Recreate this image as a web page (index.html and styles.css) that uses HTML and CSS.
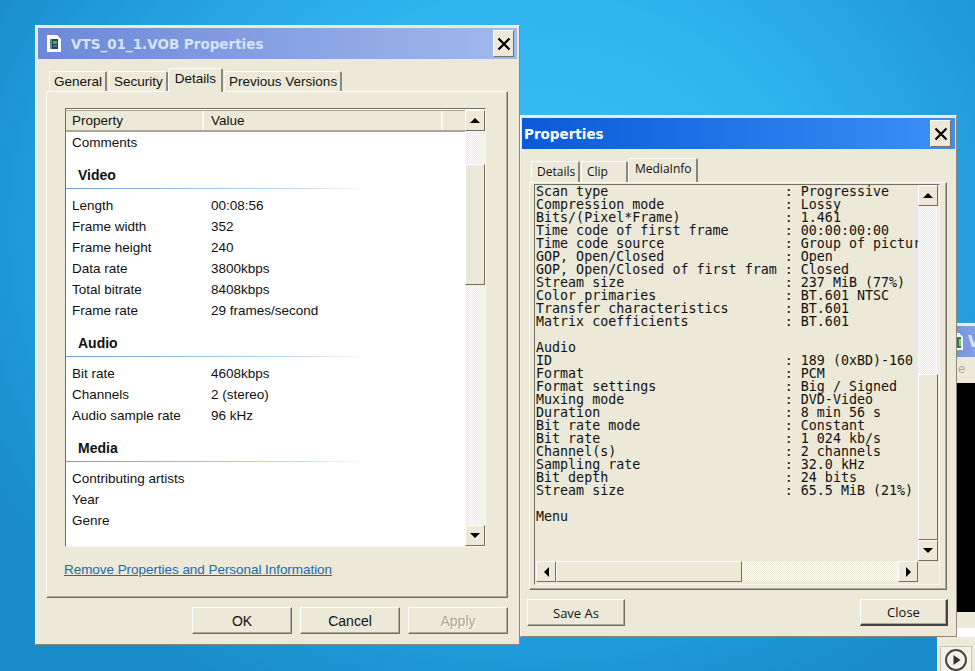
FILE: index.html
```html
<!DOCTYPE html>
<html lang="en">
<head>
    <meta charset="UTF-8">
    <title>VTS_01_1.VOB Properties</title>
    <link rel="stylesheet" href="styles.css">
</head>
<body>

    <!-- Janela de tras, quase toda escondida -->
    <div class="win win-back">
        <div class="titlebar title-faded">
            <svg class="doc-icon" viewBox="0 0 14 17"><path d="M0 0h10l4 4v13H0z" fill="#fff"/><rect x="3" y="4" width="9" height="11" fill="#2f7d4f"/><rect x="10" y="6" width="2" height="7" fill="#7fd08a"/></svg>
            <span class="back-title">V</span>
        </div>
        <div class="back-caption">e</div>
        <div class="back-video"></div>
        <div class="back-seek"></div>
        <div class="back-tools">
            <div class="play-btn">
                <svg viewBox="0 0 24 24" width="24" height="24"><circle cx="12" cy="12" r="10" fill="#f4f2e8" stroke="#444" stroke-width="2"/><path d="M9.5 7l7 5-7 5z" fill="#333"/></svg>
            </div>
        </div>
    </div>

    <!-- Propriedades do arquivo -->
    <div class="win win-file">
        <div class="titlebar title-faded">
            <svg class="doc-icon" viewBox="0 0 14 17"><path d="M0 0h10l4 4v13H0z" fill="#fff"/><rect x="3" y="4" width="8" height="10" fill="#25425e"/><rect x="3" y="4" width="2" height="10" fill="#6c8a78"/><rect x="6" y="6" width="4" height="3" fill="#5fa36d"/><rect x="6" y="10" width="4" height="2" fill="#3f78a8"/></svg>
            <span class="title-text">VTS_01_1.VOB Properties</span>
            <div class="close-btn"><svg viewBox="0 0 14 14" width="14" height="14"><path d="M1.5 1.5l11 11M12.5 1.5l-11 11" stroke="#000" stroke-width="2.2"/></svg></div>
        </div>

        <div class="tabs tabs-file">
            <div class="tab">General</div>
            <div class="tab">Security</div>
            <div class="tab tab-on">Details</div>
            <div class="tab">Previous Versions</div>
        </div>

        <div class="panel panel-file">
            <div class="list">
                <div class="list-main">
                    <div class="list-head">
                        <div class="col col-prop">Property</div>
                        <div class="col col-val">Value</div>
                        <div class="col col-rest"></div>
                    </div>
                    <div class="row"><span>Comments</span></div>

                    <div class="group">Video</div>
                    <div class="row"><span>Length</span><span>00:08:56</span></div>
                    <div class="row"><span>Frame width</span><span>352</span></div>
                    <div class="row"><span>Frame height</span><span>240</span></div>
                    <div class="row"><span>Data rate</span><span>3800kbps</span></div>
                    <div class="row"><span>Total bitrate</span><span>8408kbps</span></div>
                    <div class="row"><span>Frame rate</span><span>29 frames/second</span></div>

                    <div class="group">Audio</div>
                    <div class="row"><span>Bit rate</span><span>4608kbps</span></div>
                    <div class="row"><span>Channels</span><span>2 (stereo)</span></div>
                    <div class="row"><span>Audio sample rate</span><span>96 kHz</span></div>

                    <div class="group">Media</div>
                    <div class="row"><span>Contributing artists</span></div>
                    <div class="row"><span>Year</span></div>
                    <div class="row"><span>Genre</span></div>
                </div>
                <div class="vscroll">
                    <div class="sb-btn"><span class="arrow arrow-up"></span></div>
                    <div class="sb-track sb-track-a"></div>
                    <div class="sb-thumb thumb-file"></div>
                    <div class="sb-track"></div>
                    <div class="sb-btn"><span class="arrow arrow-down"></span></div>
                </div>
            </div>
            <a class="remove-link" href="#">Remove Properties and Personal Information</a>
        </div>

        <div class="actions actions-file">
            <div class="btn btn-file">OK</div>
            <div class="btn btn-file">Cancel</div>
            <div class="btn btn-file btn-off">Apply</div>
        </div>
    </div>

    <!-- Propriedades do MediaInfo -->
    <div class="win win-info">
        <div class="titlebar title-active">
            <span class="title-text">Properties</span>
            <div class="close-btn close-info"><svg viewBox="0 0 14 14" width="14" height="14"><path d="M1.5 1.5l11 11M12.5 1.5l-11 11" stroke="#000" stroke-width="2.2"/></svg></div>
        </div>

        <div class="tabs tabs-info">
            <div class="tab tab-details">Details</div>
            <div class="tab tab-clip">Clip</div>
            <div class="tab tab-on tab-media">MediaInfo</div>
        </div>

        <div class="panel panel-info">
            <div class="info-frame">
                <pre class="info-text">Scan type                      : Progressive
Compression mode               : Lossy
Bits/(Pixel*Frame)             : 1.461
Time code of first frame       : 00:00:00:00
Time code source               : Group of pictur
GOP, Open/Closed               : Open
GOP, Open/Closed of first fram : Closed
Stream size                    : 237 MiB (77%)
Color primaries                : BT.601 NTSC
Transfer characteristics       : BT.601
Matrix coefficients            : BT.601

Audio
ID                             : 189 (0xBD)-160
Format                         : PCM
Format settings                : Big / Signed
Muxing mode                    : DVD-Video
Duration                       : 8 min 56 s
Bit rate mode                  : Constant
Bit rate                       : 1 024 kb/s
Channel(s)                     : 2 channels
Sampling rate                  : 32.0 kHz
Bit depth                      : 24 bits
Stream size                    : 65.5 MiB (21%)

Menu</pre>
                <div class="vscroll">
                    <div class="sb-btn"><span class="arrow arrow-up"></span></div>
                    <div class="sb-track sb-track-b"></div>
                    <div class="sb-thumb thumb-info"></div>
                    <div class="sb-btn"><span class="arrow arrow-down"></span></div>
                </div>
                <div class="hscroll">
                    <div class="sb-btn sb-btn-h"><span class="arrow arrow-left"></span></div>
                    <div class="sb-thumb thumb-h"></div>
                    <div class="sb-track"></div>
                    <div class="sb-btn sb-btn-h"><span class="arrow arrow-right"></span></div>
                </div>
            </div>
        </div>

        <div class="actions actions-info">
            <div class="btn btn-save">Save As</div>
            <div class="btn btn-close">Close</div>
        </div>
    </div>

</body>
</html>
```

FILE: styles.css
```css
html, body {
    margin: 0;
    height: 100%;
}
body {
    position: relative;
    width: 975px;
    height: 671px;
    overflow: hidden;
    font-family: "Liberation Sans", Arial, sans-serif;
    font-size: 14px;
    color: #111;
    background: radial-gradient(ellipse 620px 520px at 530px 230px, #3cc0f8 0%, #2fb4ee 45%, #1f9ad8 80%, #1a8ccb 100%);
}

/* Janelas */
.win {
    position: absolute;
    box-sizing: border-box;
    display: flex;
    flex-direction: column;
    background: #ece9d8;
    border: 1px solid #8a887c;
    border-top-color: #f4f3ea;
    border-left-color: #f4f3ea;
    padding: 2px;
}
.win-file {
    left: 35px;
    top: 25px;
    width: 485px;
    height: 620px;
}
.win-info {
    left: 520px;
    top: 115px;
    width: 437px;
    height: 522px;
    padding: 2px 1px 2px 1px;
}
.win-back {
    left: 937px;
    top: 323px;
    width: 80px;
    height: 360px;
}

.titlebar {
    flex: none;
    height: 31px;
    display: flex;
    align-items: center;
    font-family: "DejaVu Sans", sans-serif;
    font-weight: bold;
    font-size: 13.5px;
}
.title-faded {
    background: linear-gradient(90deg, #6c88d8, #9fbaec);
    color: #d9e3f6;
    padding-left: 9px;
}
.title-active {
    background: linear-gradient(90deg, #0a5ad8, #3d8ff8);
    color: #fff;
    padding-left: 2px;
}
.title-text {
    white-space: nowrap;
}
.doc-icon {
    flex: none;
    width: 14px;
    height: 17px;
    margin-right: 10px;
}
.close-btn {
    box-sizing: border-box;
    margin-left: auto;
    margin-right: 3px;
    width: 21px;
    height: 27px;
    display: flex;
    align-items: center;
    justify-content: center;
    background: #ece9d8;
    border: 1px solid;
    border-color: #fff #716f64 #716f64 #fff;
}
.close-info {
    margin-right: 4px;
}
.win-back .doc-icon {
    margin-right: 5px;
}
.back-title {
    font-size: 15px;
}

/* Abas */
.tabs {
    flex: none;
    display: flex;
    align-items: flex-end;
    height: 23px;
    margin-top: 9px;
    font-size: 13.5px;
}
.tabs-file {
    padding-left: 11px;
}
.tabs-info {
    height: 24px;
    padding-left: 9px;
    font-family: "Open Sans", sans-serif;
    font-size: 12px;
}
.tab {
    box-sizing: border-box;
    height: 20px;
    padding: 0 3px 0 4px;
    line-height: 19px;
    white-space: nowrap;
    background: #ece9d8;
    border-top: 1px solid #fff;
    border-left: 1px solid #fff;
    border-right: 2px solid #8a887c;
    border-radius: 2px 2px 0 0;
    margin-right: 2px;
}
.tab-on {
    position: relative;
    height: 24px;
    line-height: 20px;
    margin: 0 1px 0 -2px;
    padding: 0 5px 3px 6px;
    z-index: 1;
    top: 1px;
}
.tab-details {
    width: 49px;
    margin-right: 1px;
    height: 21px;
    padding-left: 5px;
}
.tab-clip {
    width: 47px;
    margin-right: 0;
    height: 21px;
    padding-left: 5px;
}
.tab-media {
    width: 70px;
    margin: 0;
    top: 0;
    padding: 0 4px 0 6px;
    text-align: left;
}

.panel {
    box-sizing: border-box;
    display: flex;
    flex-direction: column;
    border: 1px solid;
    border-color: #fff #716f64 #716f64 #fff;
    box-shadow: inset -1px -1px #aca899;
}
.panel-file {
    width: 462px;
    height: 507px;
    margin-left: 8px;
    padding: 16px 0 0 18px;
}
.panel-info {
    width: 418px;
    height: 408px;
    margin-left: 7px;
    padding: 1px 0 0 4px;
}

/* Lista de detalhes */
.list {
    box-sizing: border-box;
    display: flex;
    width: 421px;
    height: 439px;
    background: #fff;
    border: 1px solid;
    border-color: #716f64 #f6f5ee #f6f5ee #716f64;
    padding-top: 1px;
}
.list-main {
    flex: 1;
    min-width: 0;
    font-size: 13.5px;
}
.list-head {
    display: flex;
    height: 22px;
    line-height: 20px;
    background: #ece9d8;
    box-sizing: border-box;
    border-bottom: 2px solid #aca899;
    border-top: 1px solid #a9a793;
}
.col {
    box-sizing: border-box;
    padding-left: 6px;
    border-right: 2px solid #fbfaf2;
}
.col-prop { width: 138px; }
.col-val { width: 239px; padding-left: 7px; }
.col-rest { flex: 1; border-right: 0; }

.row {
    display: grid;
    grid-template-columns: 139px 1fr;
    height: 21px;
    line-height: 21px;
    padding-left: 6px;
    white-space: nowrap;
}
.group {
    box-sizing: border-box;
    height: 36px;
    margin-bottom: 6px;
    padding: 13px 0 0 12px;
    font-weight: bold;
    font-size: 14px;
    line-height: 18px;
    color: #111;
    border-bottom: 1px solid;
    border-image: linear-gradient(90deg, #6a9fd4, #c6dcef 60%, #fff 75%) 1;
}

.remove-link {
    margin: 15px 0 0 -1px;
    color: #2468ad;
    font-size: 13.5px;
    line-height: 16px;
    white-space: nowrap;
    letter-spacing: -0.05px;
}

/* Barras de rolagem */
.vscroll {
    flex: none;
    width: 20px;
    display: flex;
    flex-direction: column;
}
.hscroll {
    display: flex;
    height: 21px;
}
.sb-btn {
    box-sizing: border-box;
    flex: none;
    height: 21px;
    display: flex;
    align-items: center;
    justify-content: center;
    background: #ece9d8;
    border: 1px solid;
    border-color: #fff #716f64 #716f64 #fff;
}
.sb-btn-h {
    width: 20px;
}
.sb-track {
    flex: 1;
    background: repeating-conic-gradient(#ece9d8 0 25%, #fff 0 50%) 0 0 / 2px 2px;
}
.sb-track-a { flex: none; height: 33px; }
.sb-track-b { flex: none; height: 168px; }
.sb-thumb {
    box-sizing: border-box;
    background: #ece9d8;
    border: 1px solid;
    border-color: #fff #716f64 #716f64 #fff;
}
.thumb-file { flex: none; height: 121px; }
.thumb-info { flex: 1; }
.thumb-h { flex: none; width: 186px; }

.arrow {
    width: 0;
    height: 0;
    border-style: solid;
    border-color: transparent;
}
.arrow-up { border-width: 0 5px 5px; border-bottom-color: #000; }
.arrow-down { border-width: 5px 5px 0; border-top-color: #000; }
.arrow-left { border-width: 5px 5px 5px 0; border-right-color: #000; }
.arrow-right { border-width: 5px 0 5px 5px; border-left-color: #000; }

/* Texto do MediaInfo */
.info-frame {
    box-sizing: border-box;
    display: grid;
    grid-template-columns: 382px 20px;
    grid-template-rows: 376px 21px;
    width: 406px;
    height: 401px;
    border: 1px solid;
    border-color: #716f64 #f6f5ee #f6f5ee #716f64;
    padding: 0 0 0 1px;
}
.info-text {
    margin: 0;
    font-family: "DejaVu Sans Mono", monospace;
    font-size: 13.33px;
    line-height: 13px;
    color: #111;
    grid-row: 1;
    grid-column: 1;
}
.info-frame .vscroll {
    grid-row: 1;
    grid-column: 2;
    height: 376px;
}
.info-frame .hscroll {
    grid-row: 2;
    grid-column: 1;
}

/* Botoes */
.actions {
    display: flex;
    flex: none;
}
.actions-file {
    justify-content: flex-end;
    gap: 8px;
    margin-top: 9px;
    padding-right: 9px;
}
.actions-info {
    justify-content: space-between;
    margin-top: 9px;
    padding: 0 7px 0 5px;
    font-family: "Open Sans", sans-serif;
    font-size: 13px;
}
.btn {
    box-sizing: border-box;
    height: 27px;
    display: flex;
    align-items: center;
    justify-content: center;
    background: #ece9d8;
    border: 1px solid;
    border-color: #fff #716f64 #716f64 #fff;
    box-shadow: inset -1px -1px #aca899;
}
.btn-file { width: 100px; }
.btn-off {
    color: #a7a595;
    text-shadow: 1px 1px #fff;
}
.btn-save { width: 98px; }
.btn-close {
    width: 88px;
    border-color: #444;
    border-top-color: #fff;
    border-left-color: #fff;
    border-width: 1px 2px 2px 1px;
}

/* Janela de tras */
.back-caption {
    height: 27px;
    padding-left: 18px;
    font-size: 13px;
    line-height: 24px;
    color: #aeac9c;
}
.back-video {
    height: 241px;
    background: #000;
}
.back-seek {
    height: 26px;
    box-sizing: border-box;
    border-bottom: 9px solid #fff;
    margin-left: 8px;
}
.back-tools {
    padding: 9px 0 0 0;
}
.play-btn {
    box-sizing: border-box;
    width: 32px;
    height: 34px;
    padding: 1px 0 0 3px;
    border: 1px solid #c8c6b6;
    background: repeating-conic-gradient(#ece9d8 0 25%, #fff 0 50%) 0 0 / 2px 2px;
}
```
